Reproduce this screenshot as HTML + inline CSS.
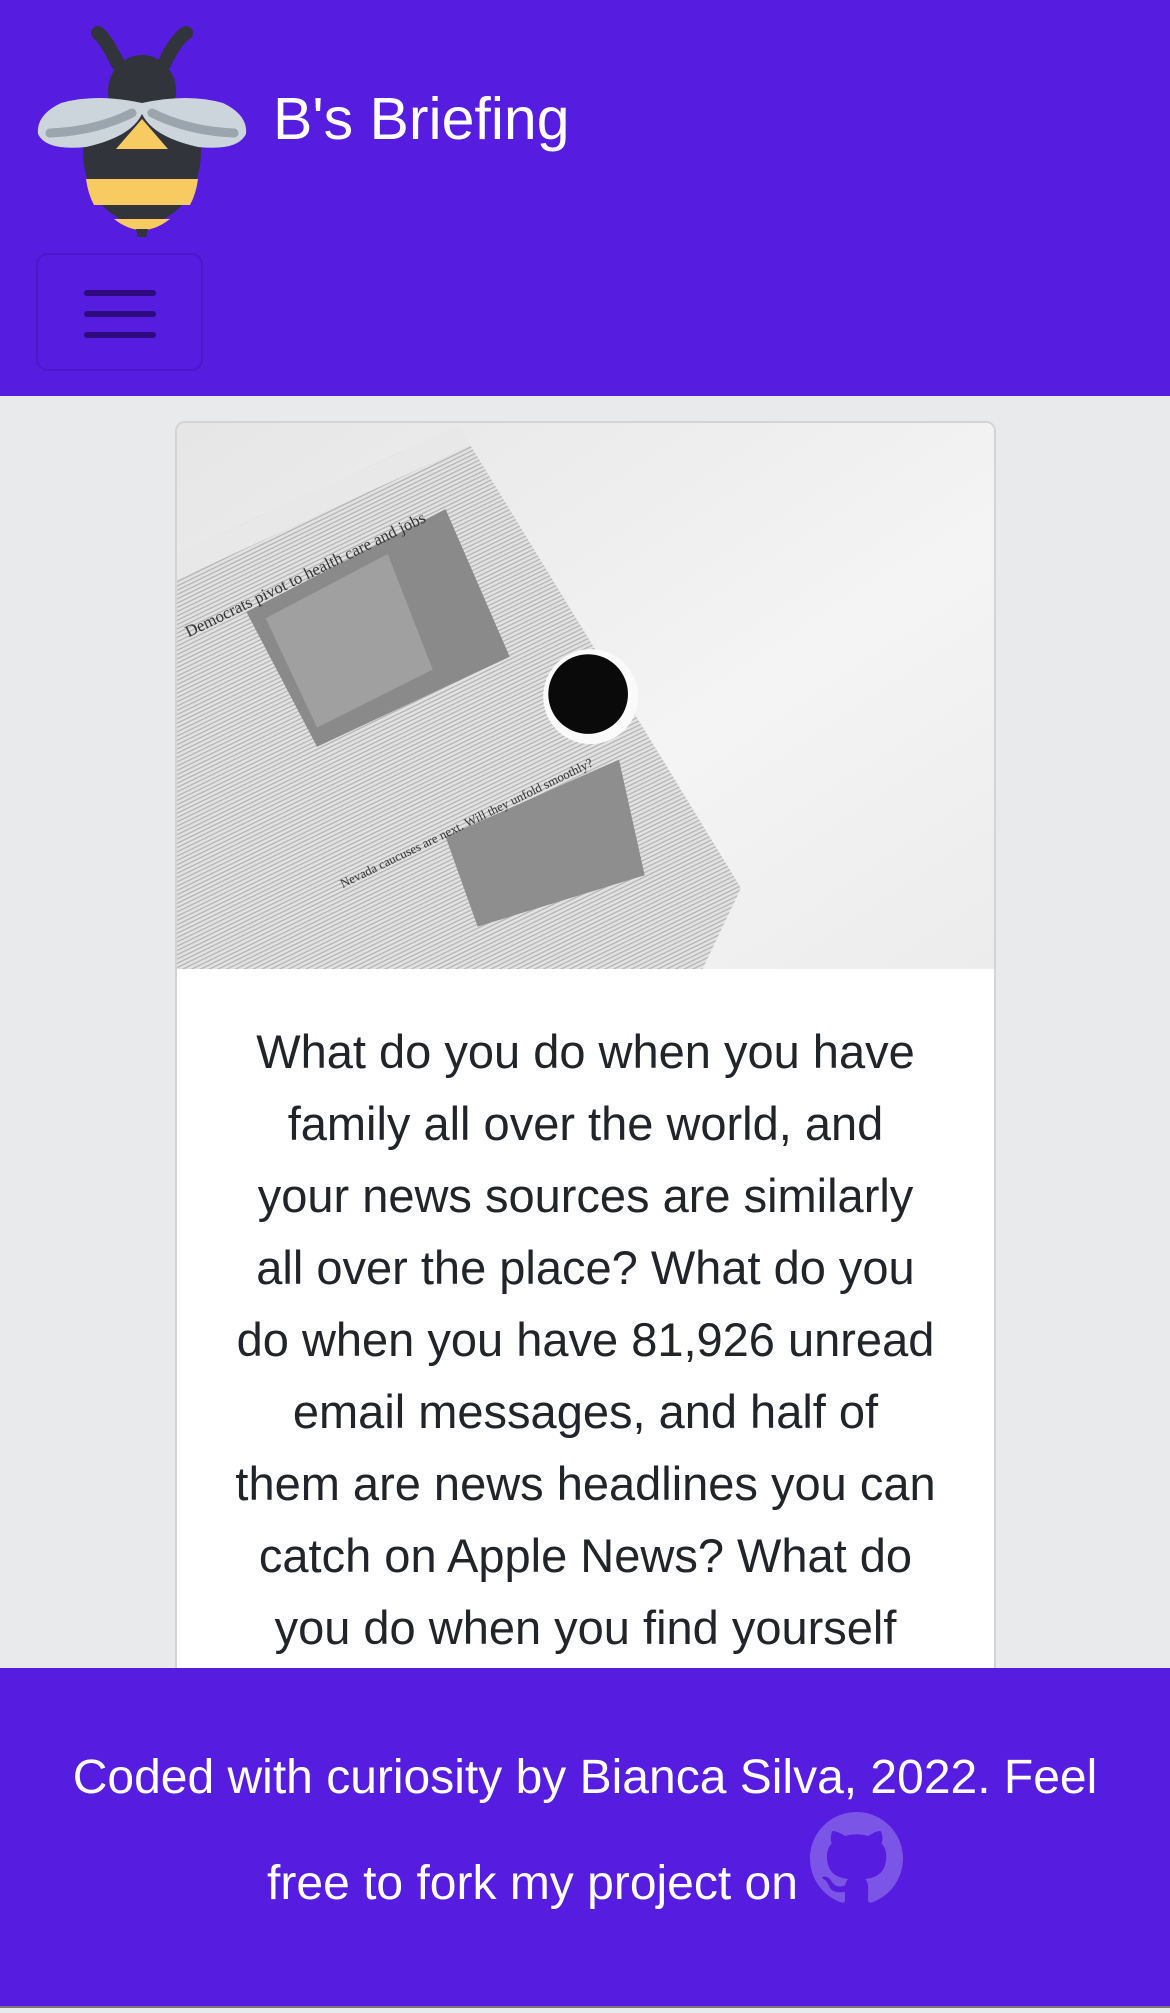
<!DOCTYPE html>
<html><head><meta charset="utf-8">
<style>
*{margin:0;padding:0;box-sizing:border-box}
html,body{width:1170px;height:2013px;overflow:hidden;background:#e9eaec;font-family:"Liberation Sans",sans-serif;position:relative}
.hdr{position:absolute;left:0;top:0;width:1170px;height:396px;background:#561cdf}
.title{position:absolute;left:273px;top:86px;font-size:59px;color:#fff;line-height:66px}
.tog{position:absolute;left:36px;top:253px;width:167px;height:118px;border:2px solid rgba(0,0,0,0.1);border-radius:12px}
.tog i{position:absolute;left:46px;width:72px;height:6px;background:#2d0a7e;border-radius:3px}
.card{position:absolute;left:175px;top:421px;width:821px;height:1600px;background:#fff;border:2px solid #d4d4d6;border-radius:10px;overflow:hidden}
.txt{position:absolute;left:0;top:545px;width:817px;text-align:center;font-size:47px;line-height:72px;color:#212529;padding-top:48px;white-space:nowrap}
.ftr{position:absolute;left:0;top:1668px;width:1170px;height:338px;background:#561cdf;color:#fff;text-align:center;font-size:48px}
.bar{position:absolute;left:0;top:2006px;width:1170px;height:7px;background:#e9eaec;border-top:2px solid #777}
</style></head><body>
<div class="hdr">
<svg style="position:absolute;left:36px;top:19px" width="222" height="218" viewBox="0 0 222 218">
 <path d="M82 45 Q70 20 62 14" stroke="#31343b" stroke-width="14" stroke-linecap="round" fill="none"/>
 <path d="M128 45 Q140 20 150 14" stroke="#31343b" stroke-width="14" stroke-linecap="round" fill="none"/>
 <ellipse cx="106" cy="72" rx="34" ry="36" fill="#31343b"/>
 <path d="M48 115 Q42 165 72 192 Q106 218 140 192 Q170 165 164 115 Q106 95 48 115Z" fill="#31343b"/>
 <path d="M106 100 L132 130 L80 130Z" fill="#f7cb62"/>
 <path d="M50 160 L162 160 Q160 175 154 186 L58 186 Q52 175 50 160Z" fill="#f7cb62"/>
 <path d="M78 200 L134 200 Q106 222 78 200Z" fill="#f7cb62"/>
 <path d="M100 210 L112 210 L106 236Z" fill="#31343b"/>
 <path d="M106 84 Q60 74 25 84 Q0 96 2 115 Q10 132 50 128 Q95 118 106 95Z" fill="#ccd4dc"/>
 <path d="M106 84 Q152 74 187 84 Q212 96 210 115 Q202 132 162 128 Q117 118 106 95Z" fill="#ccd4dc"/>
 <path d="M14 114 Q60 112 96 94" stroke="#9aa5ae" stroke-width="9" stroke-linecap="round" fill="none"/>
 <path d="M198 114 Q152 112 116 94" stroke="#9aa5ae" stroke-width="9" stroke-linecap="round" fill="none"/>
</svg>
<div class="title">B's Briefing</div>
<div class="tog"><i style="top:35px"></i><i style="top:56px"></i><i style="top:77px"></i></div>
</div>
<div class="card">
<svg width="821" height="546" viewBox="136 328 639 425" preserveAspectRatio="none" style="display:block">
 <defs>
 <linearGradient id="bg" x1="0" y1="0" x2="1" y2="1"><stop offset="0" stop-color="#e6e6e6"/><stop offset="0.6" stop-color="#f4f4f4"/><stop offset="1" stop-color="#ececec"/></linearGradient>
 <pattern id="np" width="4" height="3" patternUnits="userSpaceOnUse" patternTransform="rotate(-26)"><rect width="4" height="3" fill="#e2e2e2"/><rect width="4" height="1" fill="#b4b4b4"/></pattern>
 </defs>
 <rect x="136" y="328" width="639" height="425" fill="url(#bg)"/>
 <polygon points="136,430 355,330 575,690 545,753 136,753" fill="url(#np)"/>
 <polygon points="136,430 355,330 365,345 136,450" fill="#e8e8e8"/>
 <polygon points="190,475 345,395 395,510 245,580" fill="#8a8a8a"/>
 <polygon points="205,480 300,430 335,520 245,565" fill="#a0a0a0"/>
 <polygon points="345,650 480,590 500,680 370,720" fill="#8e8e8e"/>
 <circle cx="458" cy="541" r="37" fill="#fafafa"/>
 <circle cx="456" cy="539" r="31" fill="#0a0a0a"/>
 <text x="145" y="495" font-family="Liberation Serif,serif" font-size="13" fill="#333" transform="rotate(-26 145 495)">Democrats pivot to health care and jobs</text>
 <text x="265" y="690" font-family="Liberation Serif,serif" font-size="10" fill="#333" transform="rotate(-26 265 690)">Nevada caucuses are next. Will they unfold smoothly?</text>
</svg>
<div class="txt">What do you do when you have<br>family all over the world, and<br>your news sources are similarly<br>all over the place? What do you<br>do when you have 81,926 unread<br>email messages, and half of<br>them are news headlines you can<br>catch on Apple News? What do<br>you do when you find yourself<br>wanting more</div>
</div>
<div class="ftr">
<div style="position:absolute;left:0;width:1170px;top:84px;line-height:52px">Coded with curiosity by Bianca Silva, 2022. Feel</div>
<div style="position:absolute;left:0;width:1170px;top:144px;display:flex;justify-content:center;align-items:flex-end">
<span style="line-height:52px;margin-right:12px;margin-bottom:-5px">free to fork my project on</span>
<svg width="93" height="93" viewBox="0 0 16 16"><path fill="#7b55e6" d="M8 0C3.58 0 0 3.58 0 8c0 3.54 2.29 6.53 5.47 7.59.4.07.55-.17.55-.38 0-.19-.01-.82-.01-1.49-2.01.37-2.53-.49-2.69-.94-.09-.23-.48-.94-.82-1.13-.28-.15-.68-.52-.01-.53.63-.01 1.08.58 1.23.82.72 1.21 1.87.87 2.33.66.07-.52.28-.87.51-1.07-1.78-.2-3.64-.89-3.64-3.95 0-.87.31-1.59.82-2.15-.08-.2-.36-1.02.08-2.120 0 0 .67-.21 2.2.82.64-.18 1.32-.27 2-.27.68 0 1.36.09 2 .27 1.53-1.04 2.2-.82 2.2-.82.44 1.1.16 1.92.08 2.12.51.56.82 1.27.82 2.15 0 3.07-1.87 3.75-3.65 3.95.29.25.54.73.54 1.48 0 1.07-.01 1.93-.01 2.2 0 .21.15.46.55.38A8.013 8.013 0 0016 8c0-4.42-3.58-8-8-8z"/></svg>
</div>
</div>
<div class="bar"></div>
</body></html>
